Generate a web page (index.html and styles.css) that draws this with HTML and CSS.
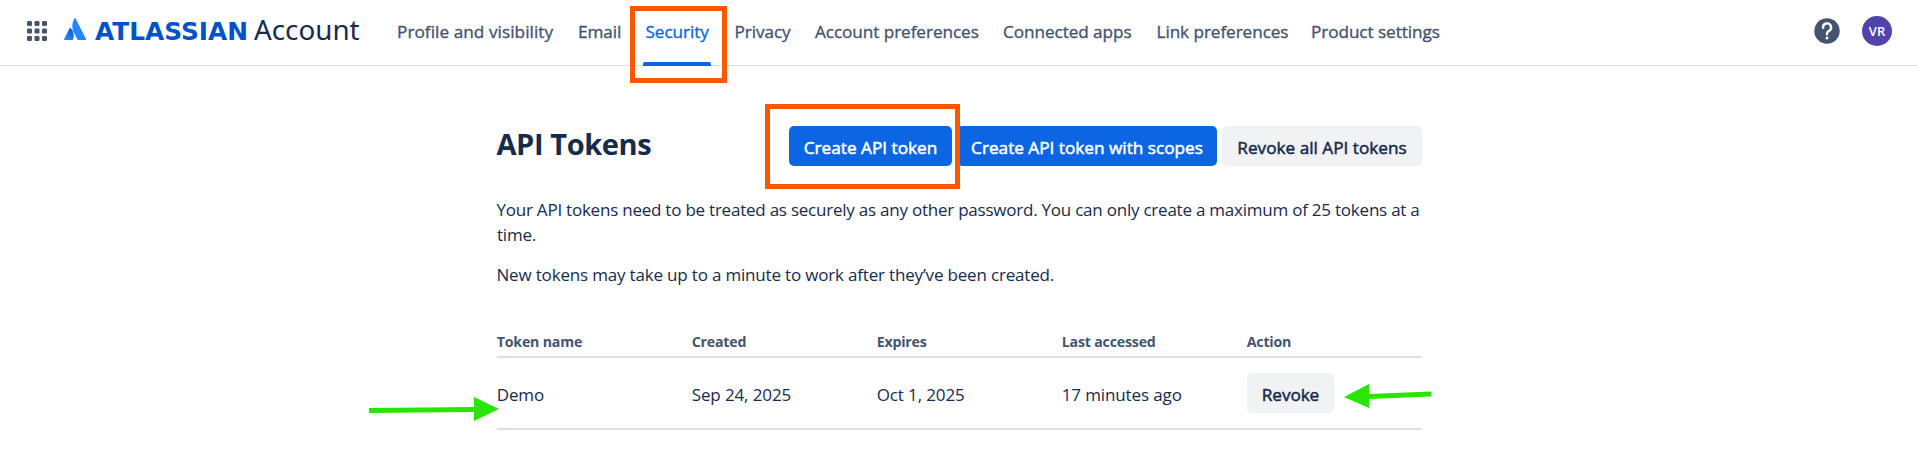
FILE: index.html
```html
<!DOCTYPE html>
<html lang="en">
<head>
<meta charset="utf-8">
<title>API Tokens</title>
<link rel="stylesheet" href="styles.css">
</head>
<body>
<header class="topbar">
  <svg class="switcher" viewBox="0 0 20 20" width="20" height="20"><g fill="#44546f"><rect width="5" height="5" rx="1.2"/><rect x="7.5" width="5" height="5" rx="1.2"/><rect x="15" width="5" height="5" rx="1.2"/><rect y="7.5" width="5" height="5" rx="1.2"/><rect x="7.5" y="7.5" width="5" height="5" rx="1.2"/><rect x="15" y="7.5" width="5" height="5" rx="1.2"/><rect y="15" width="5" height="5" rx="1.2"/><rect x="7.5" y="15" width="5" height="5" rx="1.2"/><rect x="15" y="15" width="5" height="5" rx="1.2"/></g></svg>
  <svg class="mark" viewBox="0 0 22 22" width="22" height="22"><defs><linearGradient id="g" x1="1" y1="0" x2="0.3" y2="1"><stop offset="0" stop-color="#0052cc"/><stop offset="0.9" stop-color="#2684ff"/></linearGradient></defs><path fill="url(#g)" d="M6.6 10.1c-.3-.4-.8-.3-1 .1L.1 21.1c-.2.4.1.9.6.9h7.6c.3 0 .5-.1.6-.4 1.700-3.400.7-8.500-2.300-11.500z"/><path fill="#2684ff" d="M10.600.3c-3 4.800-2.800 10.200-.8 14.200l3.600 7.100c.1.300.4.400.6.400h7.500c.5 0 .8-.5.6-.9L11.600.4c-.2-.5-.7-.5-1-.1z"/></svg>
  <div class="wordmark"><span class="brand">ATLASSIAN</span><span class="product">Account</span></div>
  <nav class="nav">
    <a class="profile">Profile and visibility</a>
    <a>Email</a>
    <a class="active">Security</a>
    <a>Privacy</a>
    <a>Account preferences</a>
    <a>Connected apps</a>
    <a>Link preferences</a>
    <a>Product settings</a>
  </nav>
  <div class="actions">
    <svg width="26" height="26" viewBox="0 0 26 26"><circle cx="13" cy="13" r="12.700" fill="#44546f"/><path d="M9.100 9.900a4 4 0 1 1 5.600 3.200c-1.200.6-1.700 1.200-1.700 2.500v.6" fill="none" stroke="#fff" stroke-width="2.400" stroke-linecap="round"/><circle cx="13" cy="20" r="1.500" fill="#fff"/></svg>
    <span class="avatar">VR</span>
  </div>
</header>
<main class="content">
  <div class="heading">
    <h1>API Tokens</h1>
    <div class="buttons">
      <button class="btn primary create">Create API token</button>
      <button class="btn primary scoped">Create API token with scopes</button>
      <button class="btn revoke-all">Revoke all API tokens</button>
    </div>
  </div>
  <p class="limits">Your API tokens need to be treated as securely as any other password. You can only create a maximum of 25 tokens at a<br>time.</p>
  <p class="delay">New tokens may take up to a minute to work after they’ve been created.</p>
  <div class="table">
    <div class="row head"><span>Token name</span><span>Created</span><span>Expires</span><span>Last accessed</span><span>Action</span></div>
    <div class="row body"><span>Demo</span><span>Sep 24, 2025</span><span>Oct 1, 2025</span><span>17 minutes ago</span><button class="btn revoke">Revoke</button></div>
  </div>
</main>
<div class="callout callout-nav"></div>
<div class="callout callout-create"></div>
<svg class="arrow arrow-left" width="132" height="26" viewBox="0 0 132 26" fill="#28e600"><path d="M1 12l105-1V1l25 12-25 12v-9L1 17z"/></svg>
<svg class="arrow arrow-right" width="90" height="26" viewBox="0 0 90 26" fill="#28e600"><path d="M1 14L26 1v10l62-2.500v5L26 16v9z"/></svg>
</body>
</html>
```
FILE: styles.css
```css
* { box-sizing: border-box; }
body { margin: 0; height: 470px; overflow: hidden; background: #fff; color: #172b4d; font: 17px/25px "Open Sans", sans-serif; position: relative; }
.topbar { display: flex; align-items: center; height: 66px; padding: 0 25px 3px 27px; border-bottom: 1px solid #dcdfe4; }
.switcher { margin-right: 17px; }
.mark { margin-right: 9px; margin-bottom: 4px; }
.wordmark { display: flex; align-items: baseline; gap: 7px; width: 302px; padding-bottom: 2px; white-space: nowrap; }
.brand { width: 152px; color: #0052cc; font: 700 24.8px/30px "DejaVu Sans", sans-serif; letter-spacing: 0; }
.product { font: 27.8px/30px "Noto Sans", sans-serif; }
.nav { display: grid; grid-template-columns: 181px 67.5px 89px 80.5px 188px 153.5px 154.5px 130px; align-self: stretch; color: #44546f; font-size: 17.2px; line-height: 64px; letter-spacing: -0.08px; white-space: nowrap; -webkit-text-stroke: 0.35px; }
.profile { letter-spacing: 0.05px; }
.active { position: relative; color: #0c66e4; }
.active::after { content: ""; position: absolute; left: -2.5px; top: 62px; width: 68px; height: 4px; border-radius: 2px 2px 0 0; background: #0c66e4; }
.actions { display: flex; align-items: center; gap: 22px; margin-left: auto; }
.avatar { width: 30px; height: 30px; border-radius: 50%; background: #5243aa; color: #fff; font-size: 13px; font-weight: 600; line-height: 30px; text-align: center; }
.content { width: 925px; margin: 60px 0 0 497px; white-space: nowrap; }
.heading { display: flex; justify-content: space-between; height: 71px; }
h1 { margin: 0; font-size: 29px; line-height: 35px; letter-spacing: -0.4px; text-indent: -0.5px; }
.buttons { display: flex; gap: 5px; }
.btn { height: 40px; border: 0; border-radius: 5px; padding: 3px 0 0; background: #f1f2f4; color: #172b4d; font: 17.2px/37px "Open Sans", sans-serif; text-align: center; -webkit-text-stroke: 0.5px; }
.primary { background: #0c66e4; color: #fff; }
.create { width: 163px; }
.scoped { width: 260px; }
.revoke-all { width: 200px; }
.revoke { width: 87px; letter-spacing: -0.1px; }
p { margin: 0 0 15px; text-indent: -0.5px; }
.limits { letter-spacing: -0.23px; }
.delay { letter-spacing: -0.18px; }
.table { margin-top: 39px; }
.row { display: grid; grid-template-columns: 195px 185px 185px 185px 87px; align-items: center; border-bottom: 2px solid #dcdfe4; text-indent: -0.3px; }
.head { height: 32px; color: #44546f; font-size: 14.2px; font-weight: 700; letter-spacing: -0.2px; }
.body { height: 72px; letter-spacing: -0.12px; }
.body span { padding-top: 2px; }
.callout { position: absolute; border: 5px solid #ff5600; }
.callout-nav { left: 630px; top: 6px; width: 97px; height: 77px; }
.callout-create { left: 765px; top: 104px; width: 195px; height: 85px; }
.arrow { position: absolute; }
.arrow-left { left: 368px; top: 396px; }
.arrow-right { left: 1343px; top: 383px; }
```
